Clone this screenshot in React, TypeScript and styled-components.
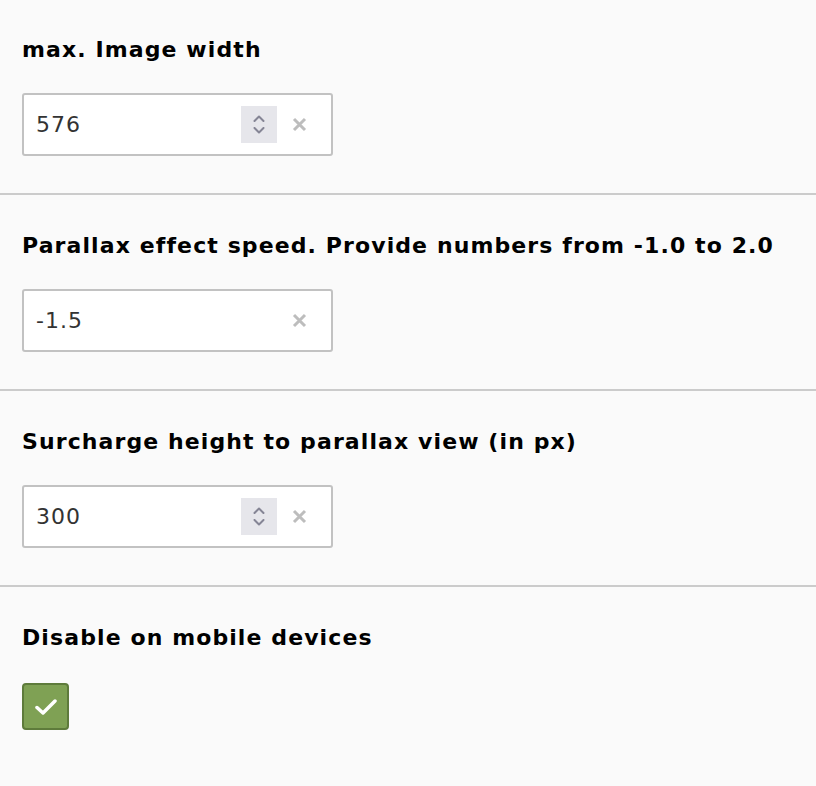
import React, { FC } from 'react';
import styled, { createGlobalStyle } from 'styled-components';

const GlobalStyle = createGlobalStyle`
  body {
    margin: 0;
    background: #fafafa;
    font-family: "DejaVu Sans", Verdana, sans-serif;
  }
`;

const Form = styled.div`
  display: flex;
  flex-direction: column;
  width: 816px;
`;

const Section = styled.section`
  display: flex;
  flex-direction: column;
  align-items: flex-start;
  padding: 38px 22px 37px;
  border-bottom: 2px solid #cbcbcb;

  &:first-child {
    padding-top: 37px;
  }

  &:last-child {
    border-bottom: none;
  }
`;

const Label = styled.div`
  font-size: 22px;
  line-height: 26px;
  font-weight: bold;
  letter-spacing: 1.1px;
  color: #000000;
  margin-bottom: 30px;
`;

const InputBox = styled.div`
  box-sizing: border-box;
  display: flex;
  align-items: center;
  width: 311px;
  height: 63px;
  padding: 0 22px 0 12px;
  background: #ffffff;
  border: 2px solid #c2c2c2;
  border-radius: 3px;
`;

const Value = styled.span`
  flex: 1;
  font-size: 22px;
  letter-spacing: 1px;
  color: #333333;
`;

const Spinner = styled.div`
  display: flex;
  flex-direction: column;
  align-items: center;
  justify-content: center;
  gap: 5px;
  width: 36px;
  height: 37px;
  background: #e6e6eb;
  margin-right: 12px;
`;

const ClearButton = styled.div`
  display: flex;
  align-items: center;
  justify-content: center;
  width: 20px;
  height: 20px;
`;

const Checkbox = styled.div`
  box-sizing: border-box;
  display: flex;
  align-items: center;
  justify-content: center;
  width: 47px;
  height: 47px;
  margin-top: 2px;
  background: #7fa154;
  border: 2px solid #5e7b3b;
  border-radius: 4px;
`;

const Chevron: FC<{ up?: boolean }> = ({ up }) => (
  <svg width="12" height="7" viewBox="0 0 12 7">
    <path
      d={up ? 'M1.5 6 L6 1.5 L10.5 6' : 'M1.5 1 L6 5.5 L10.5 1'}
      fill="none"
      stroke="#858595"
      strokeWidth="2"
      strokeLinecap="round"
      strokeLinejoin="round"
    />
  </svg>
);

const ClearIcon: FC = () => (
  <svg width="15" height="15" viewBox="0 0 15 15">
    <path d="M2 2 L13 13 M13 2 L2 13" stroke="#bdbdbd" strokeWidth="3" />
  </svg>
);

const CheckIcon: FC = () => (
  <svg width="22" height="18" viewBox="0 0 22 18">
    <path
      d="M2 9.5 L8 15 L20 3"
      fill="none"
      stroke="#ffffff"
      strokeWidth="3.5"
      strokeLinecap="round"
      strokeLinejoin="round"
    />
  </svg>
);

interface Field {
  label: string;
  value: string;
  spinner: boolean;
}

const fields: Field[] = [
  { label: 'max. Image width', value: '576', spinner: true },
  {
    label: 'Parallax effect speed. Provide numbers from -1.0 to 2.0',
    value: '-1.5',
    spinner: false,
  },
  {
    label: 'Surcharge height to parallax view (in px)',
    value: '300',
    spinner: true,
  },
];

const App: FC = (): JSX.Element => {
  return (
    <>
      <GlobalStyle />
      <Form>
        {fields.map((field) => (
          <Section key={field.label}>
            <Label>{field.label}</Label>
            <InputBox>
              <Value>{field.value}</Value>
              {field.spinner ? (
                <Spinner>
                  <Chevron up />
                  <Chevron />
                </Spinner>
              ) : null}
              <ClearButton>
                <ClearIcon />
              </ClearButton>
            </InputBox>
          </Section>
        ))}
        <Section>
          <Label>Disable on mobile devices</Label>
          <Checkbox>
            <CheckIcon />
          </Checkbox>
        </Section>
      </Form>
    </>
  );
};

export default App;
